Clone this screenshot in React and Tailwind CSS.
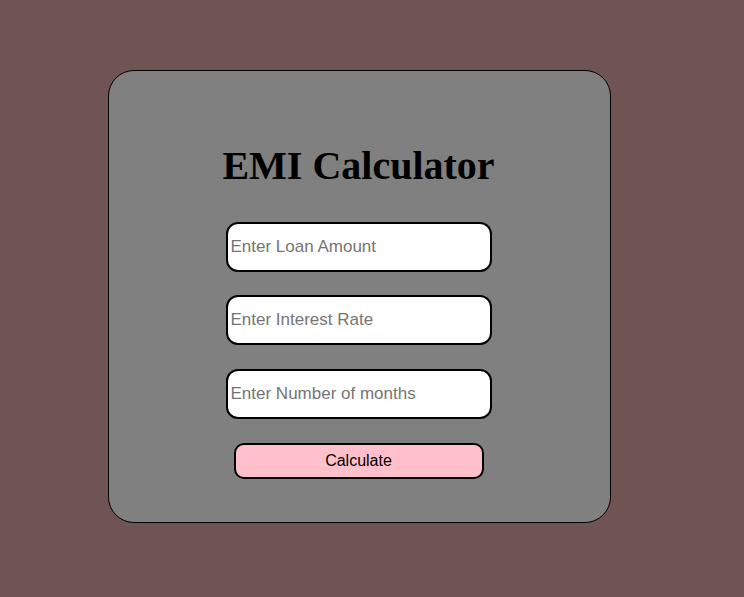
export default function App() {
  return (
    <div className="min-h-screen w-full bg-[#6f5453] pl-[108px] pt-[70px] font-['Liberation_Sans',Arial,sans-serif]">
      <div className="w-[503px] h-[453px] bg-[#808080] border border-black rounded-[26px] flex flex-col items-center pt-[72px] pr-[2px]">
        <h1 className="font-['Liberation_Serif','Times_New_Roman',serif] font-bold text-[40px] leading-[46px] text-black">
          EMI Calculator
        </h1>
        <div className="flex flex-col items-center mt-[33px]">
          <input
            type="text"
            placeholder="Enter Loan Amount"
            className="w-[266px] h-[50px] bg-white border-2 border-black rounded-[12px] pl-[3px] text-[17px] placeholder:text-[#757575] outline-none"
          />
          <input
            type="text"
            placeholder="Enter Interest Rate"
            className="mt-[23px] w-[266px] h-[50px] bg-white border-2 border-black rounded-[12px] pl-[3px] text-[17px] placeholder:text-[#757575] outline-none"
          />
          <input
            type="text"
            placeholder="Enter Number of months"
            className="mt-[24px] w-[266px] h-[50px] bg-white border-2 border-black rounded-[12px] pl-[3px] text-[17px] placeholder:text-[#757575] outline-none"
          />
          <button className="mt-[24px] w-[250px] h-[36px] bg-[#ffc0cb] border-2 border-black rounded-[10px] text-[16px] text-black">
            Calculate
          </button>
        </div>
      </div>
    </div>
  );
}
